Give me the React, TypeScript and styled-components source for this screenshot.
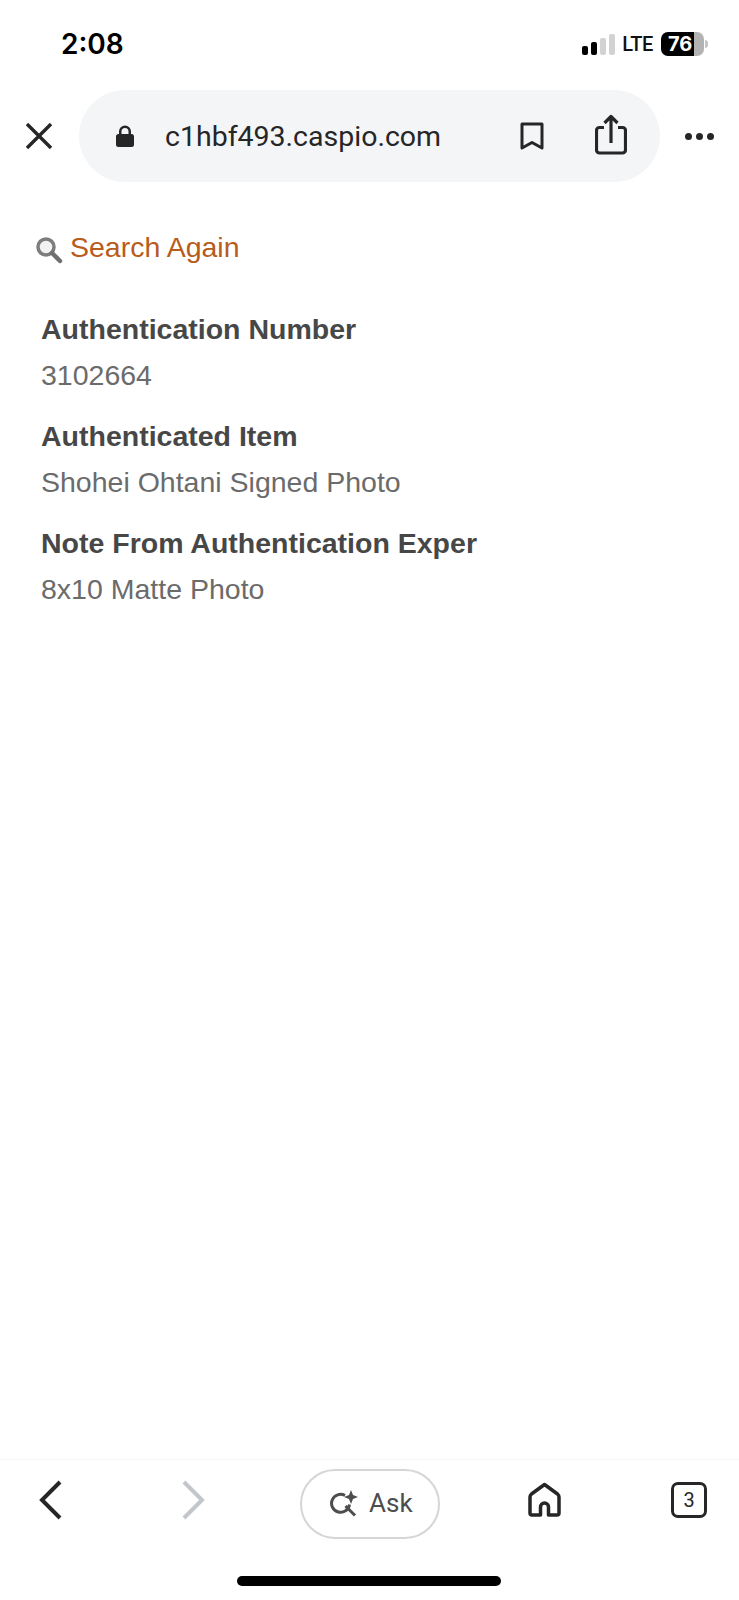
import React from "react";
import styled, { createGlobalStyle } from "styled-components";

const GlobalStyle = createGlobalStyle`
  html, body {
    margin: 0;
    padding: 0;
    background: #ffffff;
  }
`;

const Page = styled.div`
  width: 739px;
  height: 1600px;
  display: flex;
  flex-direction: column;
  overflow: hidden;
  background: #ffffff;
`;

/* ios status bar */
const StatusBar = styled.div`
  height: 90px;
  box-sizing: border-box;
  padding: 26px 31px 0 61px;
  display: flex;
  justify-content: space-between;
  align-items: flex-start;
  flex-shrink: 0;
`;

const Clock = styled.div`
  font-family: Inter, "Liberation Sans", sans-serif;
  font-size: 28px;
  line-height: 36px;
  font-weight: 600;
  color: #000000;
`;

const StatusRight = styled.div`
  display: flex;
  align-items: center;
  height: 36px;
`;

const Signal = styled.div`
  display: flex;
  align-items: flex-end;
  gap: 3px;
  height: 21px;
  margin-top: 1px;
  margin-right: 7px;
`;

const SignalBar = styled.span<{ $h: number; $on: boolean }>`
  width: 6px;
  height: ${(p) => p.$h}px;
  border-radius: 2px;
  background: ${(p) => (p.$on ? "#000000" : "#d2d2d2")};
`;

const Lte = styled.span`
  font-family: Roboto, "Liberation Sans", sans-serif;
  font-size: 20px;
  font-weight: 500;
  letter-spacing: -0.4px;
  color: #111111;
  margin-right: 8px;
`;

const Battery = styled.div`
  width: 43px;
  height: 24px;
  border-radius: 7px;
  background: linear-gradient(to right, #000000 76%, #b3b3b3 76%);
  color: #ffffff;
  font-family: Inter, "Liberation Sans", sans-serif;
  font-size: 20px;
  font-weight: 700;
  line-height: 24px;
  box-sizing: border-box;
  padding-left: 7px;
`;

const BatteryTip = styled.span`
  width: 3px;
  height: 8px;
  margin-left: 1px;
  border-radius: 0 3px 3px 0;
  background: #c4c4c4;
`;

/* browser top toolbar */
const TopBar = styled.div`
  display: flex;
  align-items: center;
  height: 92px;
  flex-shrink: 0;
  padding-left: 26px;
`;

const CloseButton = styled.div`
  width: 26px;
  height: 26px;
  margin-right: 27px;
  color: #262626;
  svg {
    display: block;
  }
`;

const AddressPill = styled.div`
  width: 581px;
  height: 92px;
  box-sizing: border-box;
  border-radius: 46px;
  background: #f3f5f7;
  display: flex;
  align-items: center;
  padding-left: 37px;
  color: #262626;
  svg {
    display: block;
    flex-shrink: 0;
  }
`;

const UrlText = styled.span`
  font-family: Roboto, "Liberation Sans", sans-serif;
  font-size: 28.5px;
  color: #262626;
  margin-left: 31px;
  width: 355px;
`;

const ShareSlot = styled.div`
  margin-left: 51px;
  margin-top: -3px;
`;

const MoreDots = styled.div`
  display: flex;
  gap: 4px;
  margin-left: 25px;
`;

const Dot = styled.span`
  width: 7px;
  height: 7px;
  border-radius: 50%;
  background: #262626;
`;

/* page content */
const Content = styled.div`
  flex: 1;
  box-sizing: border-box;
  padding: 48px 0 0 35px;
  font-family: "Liberation Sans", Arial, sans-serif;
`;

const SearchLink = styled.a`
  display: flex;
  align-items: center;
  font-size: 28.5px;
  line-height: 34px;
  color: #b85c1c;
  margin-bottom: 42px;
`;

const SearchIcon = styled.svg`
  margin-right: 7px;
  margin-top: 5px;
  flex-shrink: 0;
`;

const Field = styled.div`
  padding-left: 6px;
  margin-bottom: 14px;
`;

const FieldLabel = styled.div`
  font-size: 28.5px;
  line-height: 46px;
  font-weight: 700;
  color: #474747;
`;

const FieldValue = styled.div`
  font-size: 28.5px;
  line-height: 47px;
  color: #6b6b6b;
`;

/* browser bottom toolbar */
const BottomBar = styled.div`
  height: 141px;
  flex-shrink: 0;
  box-sizing: border-box;
  border-top: 1px solid #f6f6f6;
  position: relative;
  display: flex;
  align-items: flex-start;
  padding: 9px 0 0 35px;
  color: #262626;
  svg {
    display: block;
  }
`;

const NavIcon = styled.div<{ $gap: number; $top: number }>`
  margin-right: ${(p) => p.$gap}px;
  margin-top: ${(p) => p.$top}px;
`;

const AskPill = styled.div`
  width: 140px;
  height: 70px;
  box-sizing: border-box;
  border: 2px solid #d6d6d6;
  border-radius: 35px;
  display: flex;
  align-items: center;
  padding-left: 28px;
  margin-right: 88px;
  color: #4d4d4d;
`;

const AskText = styled.span`
  font-family: Roboto, "Liberation Sans", sans-serif;
  font-size: 26px;
  font-weight: 400;
  margin-left: 9px;
  margin-top: -2px;
`;

const TabCount = styled.div`
  width: 36px;
  height: 36px;
  box-sizing: border-box;
  border: 3px solid #262626;
  border-radius: 7px;
  margin-left: 110px;
  margin-top: 13px;
  display: flex;
  align-items: center;
  justify-content: center;
  font-family: Roboto, "Liberation Sans", sans-serif;
  font-size: 20px;
  font-weight: 400;
  color: #262626;
`;

const HomeIndicator = styled.div`
  position: absolute;
  left: 237px;
  bottom: 14px;
  width: 264px;
  height: 10px;
  border-radius: 5px;
  background: #000000;
`;

const fields = [
  { label: "Authentication Number", value: "3102664" },
  { label: "Authenticated Item", value: "Shohei Ohtani Signed Photo" },
  { label: "Note From Authentication Exper", value: "8x10 Matte Photo" },
];

const App = () => {
  return (
    <Page>
      <GlobalStyle />
      <StatusBar>
        <Clock>2:08</Clock>
        <StatusRight>
          <Signal>
            <SignalBar $h={9} $on />
            <SignalBar $h={13} $on />
            <SignalBar $h={17} $on={false} />
            <SignalBar $h={21} $on={false} />
          </Signal>
          <Lte>LTE</Lte>
          <Battery>76</Battery>
          <BatteryTip />
        </StatusRight>
      </StatusBar>

      <TopBar>
        <CloseButton>
          <svg width="26" height="26" viewBox="0 0 26 26" fill="none" stroke="currentColor" strokeWidth="3.4">
            <path d="M1 1 L25 25 M25 1 L1 25" />
          </svg>
        </CloseButton>
        <AddressPill>
          <svg width="18" height="22" viewBox="0 0 18 22" fill="currentColor">
            <path d="M3 9V6.500a6 6 0 0 1 12 0V9h.5A2.500 2.500 0 0 1 18 11.500v8a2.500 2.500 0 0 1-2.500 2.500h-13A2.500 2.500 0 0 1 0 19.500v-8A2.500 2.500 0 0 1 2.500 9zm2.500 0h7V6.500a3.500 3.500 0 0 0-7 0z" />
          </svg>
          <UrlText>c1hbf493.caspio.com</UrlText>
          <svg width="24" height="28" viewBox="0 0 24 28" fill="none" stroke="currentColor" strokeWidth="3" strokeLinejoin="round">
            <path d="M2 2h20v24l-10-5.500L2 26z" />
          </svg>
          <ShareSlot>
            <svg width="32" height="41" viewBox="0 0 32 41" fill="none" stroke="currentColor" strokeWidth="3.200" strokeLinejoin="round">
              <path d="M9 13.500H4.500a3 3 0 0 0-3 3V36a3 3 0 0 0 3 3h23a3 3 0 0 0 3-3V16.500a3 3 0 0 0-3-3H23" />
              <path d="M16 29V3M9.500 9L16 2.500 22.500 9" />
            </svg>
          </ShareSlot>
        </AddressPill>
        <MoreDots>
          <Dot />
          <Dot />
          <Dot />
        </MoreDots>
      </TopBar>

      <Content>
        <SearchLink>
          <SearchIcon width="28" height="28" viewBox="0 0 28 28" fill="none">
            <circle cx="11" cy="11" r="8" stroke="#7d7d7d" strokeWidth="3.500" fill="#f2f2f2" />
            <path d="M17 17L25 25" stroke="#6f6f6f" strokeWidth="4.500" strokeLinecap="round" />
          </SearchIcon>
          Search Again
        </SearchLink>
        {fields.map((f) => (
          <Field key={f.label}>
            <FieldLabel>{f.label}</FieldLabel>
            <FieldValue>{f.value}</FieldValue>
          </Field>
        ))}
      </Content>

      <BottomBar>
        <NavIcon $gap={114} $top={11}>
          <svg width="28" height="40" viewBox="0 0 28 40" fill="none" stroke="#262626" strokeWidth="4">
            <path d="M25 2L7 20l18 18" />
          </svg>
        </NavIcon>
        <NavIcon $gap={94} $top={11}>
          <svg width="29" height="40" viewBox="0 0 29 40" fill="none" stroke="#c3c6cb" strokeWidth="4">
            <path d="M7 2l18 18L7 38" />
          </svg>
        </NavIcon>
        <AskPill>
          <svg width="30" height="30" viewBox="0 0 30 30" fill="none" stroke="currentColor" strokeWidth="3">
            <path d="M15 6.500a9 9 0 1 0 4.500 9" />
            <path d="M15.500 17l9.500 9.500" />
            <path d="M21 1l2 5 5 2-5 2-2 5-2-5-5-2 5-2z" fill="currentColor" stroke="none" />
          </svg>
          <AskText>Ask</AskText>
        </AskPill>
        <NavIcon $gap={0} $top={13}>
          <svg width="33" height="35" viewBox="0 0 33 35" fill="none" stroke="#262626" strokeWidth="3.500" strokeLinejoin="round">
            <path d="M16.500 2.500L3.500 12Q2 13.300 2 15V31a2 2 0 0 0 2 2h8.500V25a4 4 0 0 1 8 0v8H29a2 2 0 0 0 2-2V15q0-1.700-1.500-3z" />
          </svg>
        </NavIcon>
        <TabCount>3</TabCount>
        <HomeIndicator />
      </BottomBar>
    </Page>
  );
};

export default App;
